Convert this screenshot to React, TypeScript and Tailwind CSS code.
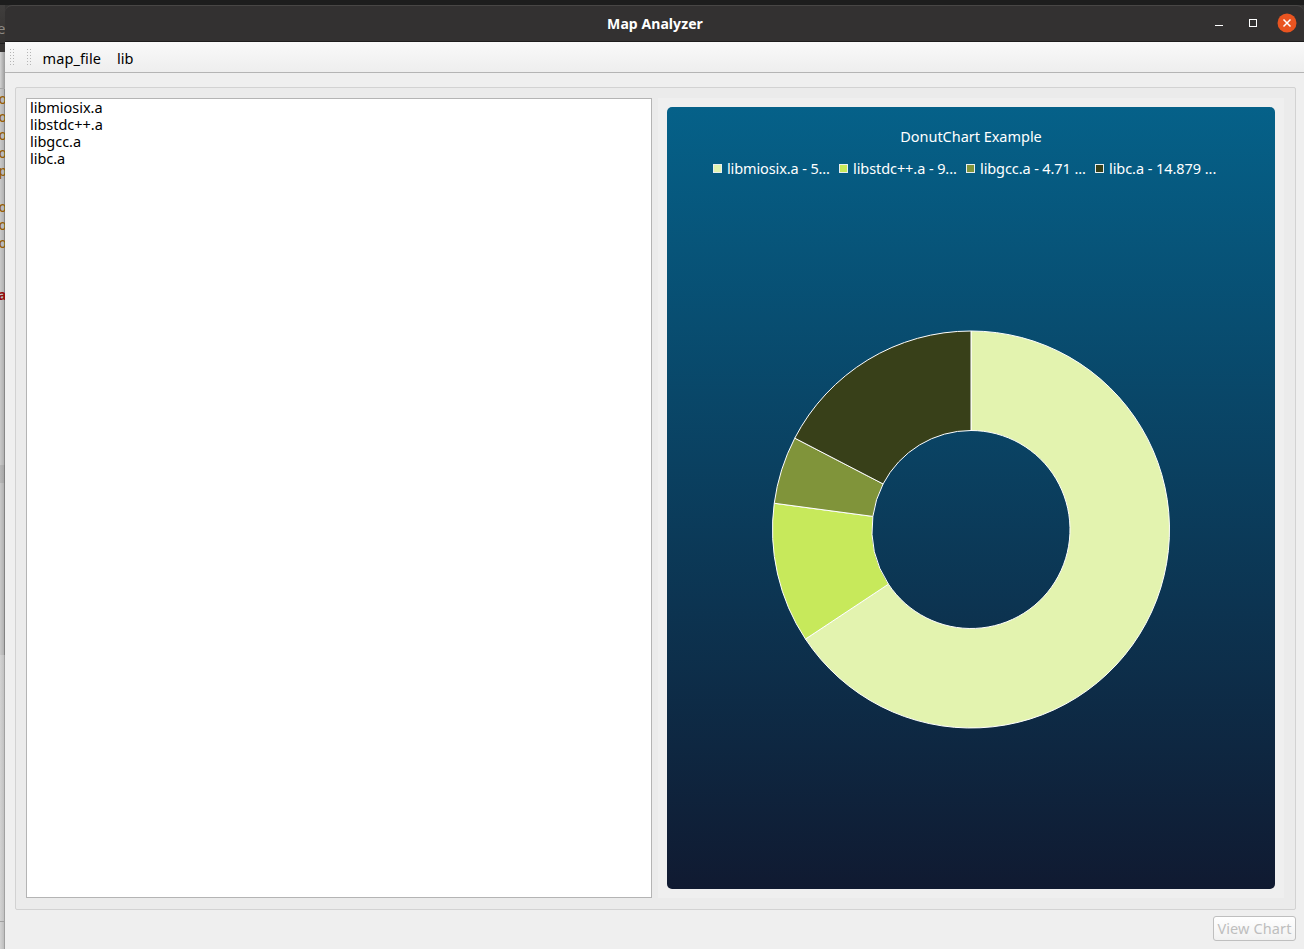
const FONT = "font-['Noto_Sans','Open_Sans',sans-serif]";

const libraries = ["libmiosix.a", "libstdc++.a", "libgcc.a", "libc.a"];

const slices = [
  { label: "libmiosix.a - 5...", color: "#e3f3af", from: 0, to: 236.5, cls: "w-[126px] tracking-[-0.12px]" },
  { label: "libstdc++.a - 9...", color: "#c7e95b", from: 236.5, to: 277.6, cls: "w-[127px] tracking-[-0.08px]" },
  { label: "libgcc.a - 4.71 ...", color: "#80943a", from: 277.6, to: 297.4, cls: "w-[129px] tracking-[-0.1px]" },
  { label: "libc.a - 14.879 ...", color: "#384019", from: 297.4, to: 360, cls: "w-[126px] tracking-[-0.06px]" },
];

const editorLines = ["o", "o", "o", "o", "p", "", "o", "o", "o"];

function point(angle: number, r: number) {
  const a = (angle * Math.PI) / 180;
  return `${200 + r * Math.sin(a)} ${200 - r * Math.cos(a)}`;
}

function slicePath(from: number, to: number) {
  const large = to - from > 180 ? 1 : 0;
  return `M${point(from, 198.5)} A198.5 198.5 0 ${large} 1 ${point(to, 198.5)} L${point(to, 99)} A99 99 0 ${large} 0 ${point(from, 99)}Z`;
}

function Grip() {
  return (
    <svg width="5" height="17" viewBox="0 0 5 17" fill="#b5b5b5" shapeRendering="crispEdges">
      {[0, 3, 6, 9, 12, 15].map((y) => (
        <g key={y}>
          <rect x="0" y={y} width="1" height="1" />
          <rect x="3" y={y} width="1" height="1" />
        </g>
      ))}
    </svg>
  );
}

function BackgroundWindow() {
  return (
    <div className="flex h-full w-[5px] shrink-0 flex-col overflow-hidden">
      <div className="flex h-[39px] shrink-0 items-center border-b border-[#1f1f1f] bg-linear-to-b/srgb from-[#403e3d] to-[#343231] pt-2 text-[15px] leading-none text-[#8b8883]">
        <span className="-ml-[3px]">e</span>
      </div>
      <div className="h-2 shrink-0 bg-[#363433]" />
      <div className="h-[37px] shrink-0 border-b border-[#a5a5a5] bg-linear-to-r/srgb from-[#d2d2d2] to-[#999999]" />
      <div className="flex h-[376px] shrink-0 flex-col bg-linear-to-r/srgb from-[#c9c9c9] via-[#b4b4b4] via-70% to-[#707070] pt-px text-[14px] leading-[18px] font-medium text-[#955d05]">
        {editorLines.map((line, i) => (
          <div key={i} className="-ml-[1.5px] h-[18px] shrink-0">{line}</div>
        ))}
        <div className="mt-[34px] -ml-[2px] h-[18px] shrink-0 font-bold text-[#930d0d]">a</div>
      </div>
      <div className="h-[18px] shrink-0 bg-linear-to-r/srgb from-[#b8b8b8] via-[#a8a8a8] via-70% to-[#6a6a6a]" />
      <div className="h-[172px] shrink-0 bg-linear-to-r/srgb from-[#c9c9c9] via-[#b4b4b4] via-70% to-[#686868]" />
      <div className="h-[267px] shrink-0 border-b border-[#a0a0a0] bg-linear-to-r/srgb from-[#d3d3d3] via-[#c4c4c4] via-70% to-[#8f8f8f]" />
      <div className="flex-1 bg-linear-to-r/srgb from-[#d3d3d3] via-[#c0c0c0] via-70% to-[#8f8f8f]" />
    </div>
  );
}

function TitleBar() {
  return (
    <header className="grid h-[37px] shrink-0 grid-cols-[1fr_auto_1fr] items-center rounded-t-[7px] border-t border-b border-t-[#484645] border-b-[#1e1d1d] bg-[#333131]">
      <span />
      <h1 className="pl-px text-[14px] leading-5 font-bold tracking-[0.07px] text-white">Map Analyzer</h1>
      <div className="flex items-center justify-end pr-[7px] pb-px">
        <svg width="8" height="10" viewBox="0 0 8 10" className="mr-[26px]" shapeRendering="crispEdges">
          <rect y="7" width="8" height="1" fill="#fff" />
        </svg>
        <svg width="8" height="8" viewBox="0 0 8 8" className="mr-[20px]" shapeRendering="crispEdges">
          <rect x="0.5" y="0.5" width="7" height="7" fill="none" stroke="#fff" />
        </svg>
        <svg width="20" height="20" viewBox="0 0 20 20">
          <circle cx="10" cy="10" r="9.5" fill="#e95420" />
          <path d="M6.5 6.5l7 7M13.5 6.5l-7 7" stroke="#fff" strokeWidth="1.5" />
        </svg>
      </div>
    </header>
  );
}

export default function App() {
  return (
    <div className={`${FONT} flex h-[949px] w-[1304px] flex-col overflow-hidden bg-[#1d1d1d] text-[14.5px] text-black`}>
      <div className="h-[5px] shrink-0" />
      <div className="flex min-h-0 flex-1">
        <BackgroundWindow />
        <main className="flex min-w-0 flex-1 flex-col bg-[#363534]">
          <TitleBar />
          <nav className="flex h-[31px] shrink-0 items-start border-b border-[#b4b4b4] bg-linear-to-b/srgb from-[#f9f9f9] to-[#eeeeee] pt-[7px] pl-[5px]">
            <Grip />
            <span className="w-3" />
            <Grip />
            <span className="ml-[10.5px] w-[74.5px] leading-[19px] tracking-[0.1px]">map_file</span>
            <span className="leading-[19px]">lib</span>
          </nav>
          <div className="flex flex-1 flex-col bg-[#efefef] pt-[14px] pr-2 pl-[10px]">
            <section className="flex h-[823px] gap-[6px] rounded-[2px] border border-[#d2d2d2] bg-[#ebebeb] p-[10px]">
              <ul className="h-[800px] w-[626px] border border-[#b4b4b4] bg-white pl-[3px] tracking-[-0.03px]">
                {libraries.map((name) => (
                  <li key={name} className="h-[17px] leading-[17px]">{name}</li>
                ))}
              </ul>
              <div className="h-[800px] w-[626px] bg-[#efefef] p-[9px]">
                <div className="flex h-[782px] w-[608px] flex-col items-center rounded-[5px] bg-linear-to-b/srgb from-[#056189] to-[#101a31] text-white">
                  <h2 className="mt-[19px] h-5 leading-5 tracking-[-0.03px]">DonutChart Example</h2>
                  <div className="mt-3 flex h-5 w-[516px] leading-5">
                    {slices.map((s) => (
                      <div key={s.label} className={`${s.cls} flex shrink-0 items-center whitespace-nowrap`}>
                        <svg width="9" height="9" viewBox="0 0 9 9" className="mt-px mr-[5px] shrink-0">
                          <rect x="0.5" y="0.5" width="8" height="8" fill={s.color} stroke="#e8eef0" />
                        </svg>
                        {s.label}
                      </div>
                    ))}
                  </div>
                  <svg width="400" height="400" viewBox="0 0 400 400" className="mt-[151px]">
                    {slices.map((s) => (
                      <path key={s.label} d={slicePath(s.from, s.to)} fill={s.color} stroke="#fff" strokeWidth="1" transform="translate(0 0.5)" />
                    ))}
                  </svg>
                </div>
              </div>
            </section>
            <button className="mt-[6px] flex h-[25px] w-[83px] items-center justify-center self-end rounded-[3px] border border-[#bfbfbf] bg-linear-to-b/srgb from-white to-[#f1f1f1] leading-none tracking-[0.12px] whitespace-nowrap text-[#bebebe]">
              View Chart
            </button>
          </div>
        </main>
      </div>
    </div>
  );
}
